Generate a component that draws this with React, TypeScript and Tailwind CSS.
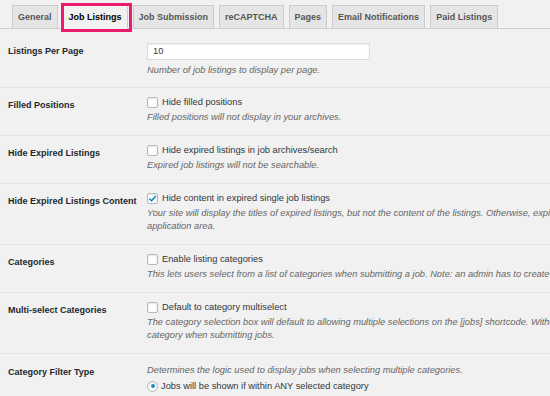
import React from "react";

const font = { fontFamily: '"Liberation Sans", Arial, sans-serif' };

function Tab({ label, active }: { label: string; active?: boolean }) {
  return (
    <div className="relative">
      <div
        className={
          "h-[24px] -mb-px px-[5px] border border-[#cccccc] flex items-center text-[9px] font-bold leading-none whitespace-nowrap " +
          (active
            ? "bg-[#f1f1f1] border-b-[#f1f1f1] text-[#000000]"
            : "bg-[#e5e5e5] text-[#555555]")
        }
      >
        {label}
      </div>
      {active && (
        <div className="absolute left-[-2px] right-[-4px] top-[-2px] bottom-[-4px] border-[3px] border-[#ec1a6e] pointer-events-none" />
      )}
    </div>
  );
}

function Checkbox({ checked }: { checked?: boolean }) {
  return (
    <span className="w-[11px] h-[11px] shrink-0 bg-white border border-[#b4b9be] rounded-[2px] shadow-[inset_0_1px_2px_rgba(0,0,0,0.1)] flex items-center justify-center">
      {checked && (
        <svg width="9" height="9" viewBox="0 0 10 10">
          <path d="M1.5 5.2 L4 7.6 L8.6 2.2" fill="none" stroke="#1e8cbe" strokeWidth="1.8" />
        </svg>
      )}
    </span>
  );
}

function Radio({ checked }: { checked?: boolean }) {
  return (
    <span className="w-[11px] h-[11px] shrink-0 bg-white border border-[#b4b9be] rounded-full shadow-[inset_0_1px_2px_rgba(0,0,0,0.1)] flex items-center justify-center">
      {checked && <span className="w-[4px] h-[4px] rounded-full bg-[#1e8cbe]" />}
    </span>
  );
}

function Desc({ lines }: { lines: string[] }) {
  return (
    <div className="mt-[2px]">
      {lines.map((l, i) => (
        <div key={i} className="h-[13px] leading-[13px] text-[9.3px] italic text-[#666666] whitespace-nowrap">
          {l}
        </div>
      ))}
    </div>
  );
}

function CheckRow({
  label,
  text,
  desc,
  checked,
}: {
  label: string;
  text: string;
  desc: string[];
  checked?: boolean;
}) {
  return (
    <div className="flex border-b border-[#e2e2e2]">
      <div className="w-[147px] shrink-0 pl-[8px] pt-[10px] text-[9px] font-bold leading-[14px] text-[#23282d] whitespace-nowrap">
        {label}
      </div>
      <div className="pt-[7px] pb-[11px]">
        <div className="flex items-center gap-[4px] h-[14px]">
          <Checkbox checked={checked} />
          <span className="text-[9.3px] leading-[14px] text-[#32373c] whitespace-nowrap">{text}</span>
        </div>
        <Desc lines={desc} />
      </div>
    </div>
  );
}

export default function App() {
  return (
    <div className="w-[550px] h-[396px] overflow-hidden bg-[#f1f1f1]" style={font}>
      <div className="flex gap-[5px] pl-[12px] pt-[5px] border-b border-[#cccccc]">
        <Tab label="General" />
        <Tab label="Job Listings" active />
        <Tab label="Job Submission" />
        <Tab label="reCAPTCHA" />
        <Tab label="Pages" />
        <Tab label="Email Notifications" />
        <Tab label="Paid Listings" />
      </div>

      <div className="flex border-b border-[#e2e2e2]">
        <div className="w-[147px] shrink-0 pl-[8px] pt-[15px] text-[9px] font-bold leading-[14px] text-[#23282d] whitespace-nowrap">
          Listings Per Page
        </div>
        <div className="pt-[14px] pb-[10px]">
          <div className="w-[223px] h-[17px] bg-white border border-[#dddddd] shadow-[inset_0_1px_2px_rgba(0,0,0,0.07)] flex items-center pl-[5px] text-[9.3px] text-[#32373c]">
            10
          </div>
          <div className="mt-[3px]">
            <div className="h-[14px] leading-[14px] text-[9.3px] italic text-[#666666] whitespace-nowrap">
              Number of job listings to display per page.
            </div>
          </div>
        </div>
      </div>

      <CheckRow
        label="Filled Positions"
        text="Hide filled positions"
        desc={["Filled positions will not display in your archives."]}
      />
      <CheckRow
        label="Hide Expired Listings"
        text="Hide expired listings in job archives/search"
        desc={["Expired job listings will not be searchable."]}
      />
      <CheckRow
        label="Hide Expired Listings Content"
        text="Hide content in expired single job listings"
        checked
        desc={[
          "Your site will display the titles of expired listings, but not the content of the listings. Otherwise, expired listings display their full content minus the",
          "application area.",
        ]}
      />
      <CheckRow
        label="Categories"
        text="Enable listing categories"
        desc={[
          "This lets users select from a list of categories when submitting a job. Note: an admin has to create categories before site users can select them.",
        ]}
      />
      <CheckRow
        label="Multi-select Categories"
        text="Default to category multiselect"
        desc={[
          "The category selection box will default to allowing multiple selections on the [jobs] shortcode. Without this, visitors will only be able to select a single",
          "category when submitting jobs.",
        ]}
      />

      <div className="flex">
        <div className="w-[147px] shrink-0 pl-[8px] pt-[11px] text-[9px] font-bold leading-[14px] text-[#23282d] whitespace-nowrap">
          Category Filter Type
        </div>
        <div className="pt-[9px]">
          <div className="h-[14px] leading-[14px] text-[9.3px] italic text-[#666666] whitespace-nowrap">
            Determines the logic used to display jobs when selecting multiple categories.
          </div>
          <div className="mt-[2px] flex items-center gap-[3px] h-[14px]">
            <Radio checked />
            <span className="text-[9.3px] leading-[14px] text-[#32373c] whitespace-nowrap">
              Jobs will be shown if within ANY selected category
            </span>
          </div>
        </div>
      </div>
    </div>
  );
}
